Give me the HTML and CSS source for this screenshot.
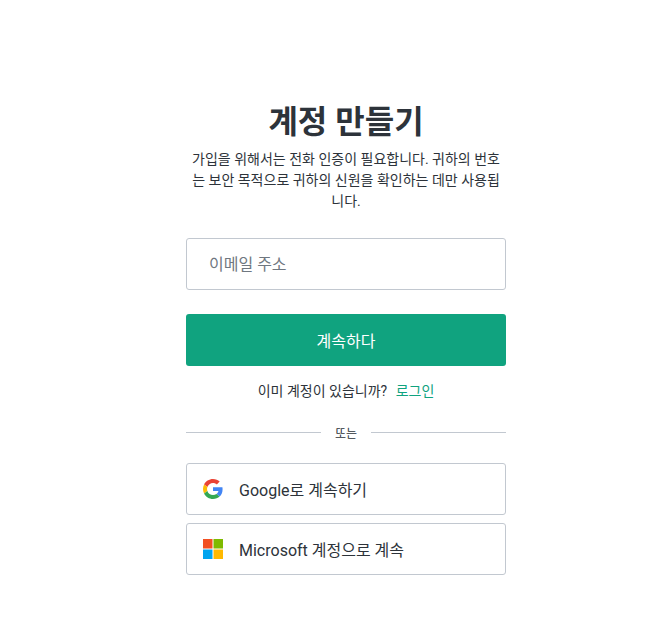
FILE: index.html
```html
<!DOCTYPE html>
<html lang="ko">
<head>
<meta charset="utf-8">
<title>계정 만들기</title>
<link rel="stylesheet" href="styles.css">
</head>
<body>
<main class="card">
  <h1 class="title">계정 만들기</h1>
  <p class="desc">가입을 위해서는 전화 인증이 필요합니다. 귀하의 번호는 보안 목적으로 귀하의 신원을 확인하는 데만 사용됩니다.</p>
  <input class="email" type="text" placeholder="이메일 주소">
  <button class="primary" type="button">계속하다</button>
  <p class="login">이미 계정이 있습니까? <a class="login-link" href="#">로그인</a></p>
  <div class="divider"><span class="divider-text">또는</span></div>
  <button class="social" type="button">
    <svg class="icon" viewBox="0 0 48 48" width="20" height="20" aria-hidden="true">
      <path fill="#EA4335" d="M24 9.5c3.54 0 6.71 1.22 9.21 3.6l6.85-6.85C35.9 2.38 30.47 0 24 0 14.62 0 6.51 5.38 2.56 13.22l7.98 6.19C12.43 13.72 17.74 9.5 24 9.5z"/>
      <path fill="#4285F4" d="M46.98 24.55c0-1.57-.15-3.09-.38-4.55H24v9.02h12.94c-.58 2.96-2.26 5.48-4.78 7.18l7.73 6c4.51-4.18 7.09-10.36 7.09-17.65z"/>
      <path fill="#FBBC05" d="M10.53 28.59c-.48-1.45-.76-2.99-.76-4.59s.27-3.14.76-4.59l-7.98-6.19C.92 16.46 0 20.12 0 24c0 3.88.92 7.54 2.56 10.78l7.97-6.19z"/>
      <path fill="#34A853" d="M24 48c6.48 0 11.93-2.13 15.89-5.81l-7.73-6c-2.15 1.45-4.92 2.3-8.16 2.3-6.26 0-11.57-4.22-13.47-9.91l-7.98 6.19C6.51 42.62 14.62 48 24 48z"/>
    </svg>
    <span>Google로 계속하기</span>
  </button>
  <button class="social" type="button">
    <svg class="icon" viewBox="0 0 20 20" width="20" height="20" aria-hidden="true">
      <rect x="0" y="0" width="9.5" height="9.5" fill="#F25022"/>
      <rect x="10.5" y="0" width="9.5" height="9.5" fill="#7FBA00"/>
      <rect x="0" y="10.5" width="9.5" height="9.5" fill="#00A4EF"/>
      <rect x="10.5" y="10.5" width="9.5" height="9.5" fill="#FFB900"/>
    </svg>
    <span>Microsoft 계정으로 계속</span>
  </button>
</main>
</body>
</html>
```
FILE: styles.css
```css
* { box-sizing: border-box; }
html, body { margin: 0; padding: 0; background: #fff; }
body {
  font-family: Roboto, "Noto Sans CJK KR", sans-serif;
  color: #2d333a;
  height: 644px;
  overflow: hidden;
}
.card {
  width: 320px;
  margin-left: 186px;
  padding-top: 100px;
  display: flex;
  flex-direction: column;
}
.title {
  margin: 0;
  height: 44px;
  font-size: 32px;
  line-height: 44px;
  font-weight: 700;
  text-align: center;
}
.desc {
  margin: 5px 0 0;
  font-size: 14px;
  line-height: 21px;
  text-align: center;
}
.email {
  margin-top: 26px;
  height: 52px;
  width: 100%;
  padding: 0 22px;
  border: 1px solid #c2c8d0;
  border-radius: 3px;
  font: inherit;
  font-size: 16px;
  color: #2d333a;
  outline: none;
  background: #fff;
}
.email::placeholder { color: #6f7780; opacity: 1; }
.primary {
  margin-top: 24px;
  height: 52px;
  width: 100%;
  border: 0;
  border-radius: 3px;
  background: #10a37f;
  color: #fff;
  font: inherit;
  font-size: 16px;
}
.login {
  margin: 14px 0 0;
  height: 22px;
  font-size: 14px;
  line-height: 22px;
  text-align: center;
}
.login-link { color: #10a37f; text-decoration: none; margin-left: 5px; }
.divider {
  margin-top: 20px;
  height: 20px;
  display: flex;
  align-items: center;
  gap: 0;
  font-size: 12px;
}
.divider::before, .divider::after {
  content: "";
  flex: 1;
  height: 1px;
  background: #c2c8d0;
}
.divider-text { width: 50px; text-align: center; }
.social {
  margin-top: 8px;
  height: 52px;
  width: 100%;
  display: flex;
  align-items: center;
  gap: 16px;
  padding: 0 16px;
  border: 1px solid #c2c8d0;
  border-radius: 3px;
  background: #fff;
  color: #2d333a;
  font: inherit;
  font-size: 16px;
}
.divider + .social { margin-top: 21px; }
.icon { flex: none; }
```
